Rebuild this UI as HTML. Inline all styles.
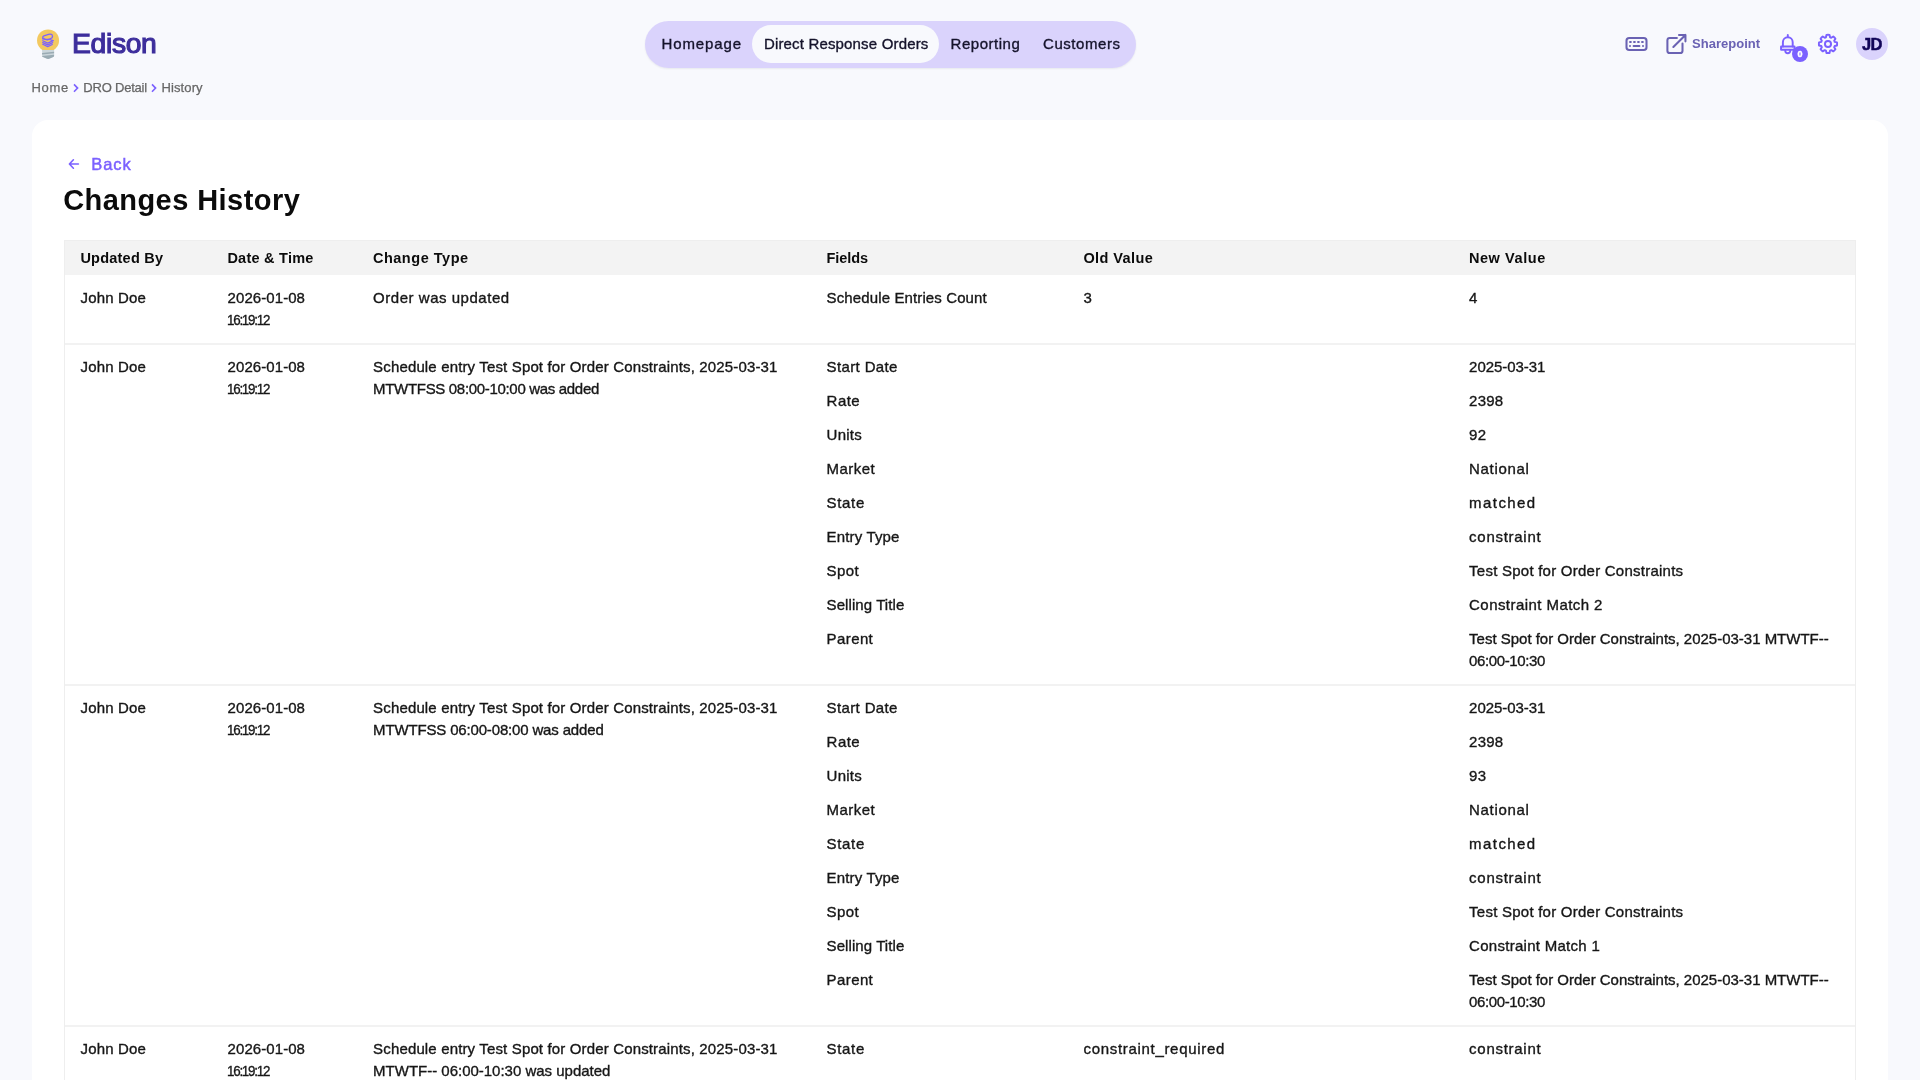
<!DOCTYPE html>
<html lang="en">
<head>
<meta charset="utf-8">
<title>Edison - Changes History</title>
<style>
*{box-sizing:border-box;margin:0;padding:0}
html,body{width:1920px;height:1080px;overflow:hidden}
body{background:#f8f9fd;font-family:"Liberation Sans",Arial,sans-serif;color:#111;position:relative}
.abs{position:absolute}
/* header */
.logo-ic{position:absolute;left:34px;top:27px;width:28px;height:34px}
.brand{position:absolute;left:72px;top:23px;font-size:28.3px;line-height:40px;font-weight:400;-webkit-text-stroke:1.15px #3d2e9c;color:#3d2e9c;white-space:nowrap}
.nav{position:absolute;left:645.3px;top:20.5px;width:490.8px;height:47px;border-radius:24px;background:#dad3fc;box-shadow:0 1px 2px rgba(16,24,40,.07)}
.nav a{position:absolute;top:4.5px;-webkit-text-stroke:0.35px #15132b;height:38px;line-height:38px;font-size:15px;color:#15132b;white-space:nowrap;text-decoration:none;}
.nav a.act{background:#f8f9fd;border-radius:19px}
.hicon{position:absolute}
.sp{position:absolute;left:1692px;top:33px;line-height:22px;font-size:13px;font-weight:700;color:#6a62b3;white-space:nowrap;}
.badge{-webkit-text-stroke:0.4px #fff;position:absolute;left:1792px;top:46px;width:16px;height:16px;border-radius:8px;background:#7b61ff;color:#fff;font-size:9px;font-weight:700;line-height:16.5px;text-align:center}
.avatar{position:absolute;left:1856px;top:28px;width:32px;height:32px;border-radius:16px;background:#dad3fc;color:#120558;-webkit-text-stroke:0.5px #120558;font-size:16.5px;font-weight:700;line-height:32.5px;text-align:center}
/* breadcrumbs */
.bc{-webkit-text-stroke:0.25px #666;position:absolute;top:77px;line-height:22px;font-size:13px;color:#666;white-space:nowrap;}
/* card */
.card{position:absolute;left:32px;top:120px;width:1856px;height:980px;background:#fff;border-radius:16px}
.back{-webkit-text-stroke:0.45px #7b61ff;position:absolute;left:91.3px;top:152px;font-size:16.5px;line-height:24px;color:#7b61ff;white-space:nowrap;}
h1{position:absolute;left:63.2px;top:180px;font-size:29px;line-height:40px;font-weight:700;color:#0b0b0b;white-space:nowrap;}
/* table */
table{position:absolute;left:64px;top:240px;width:1792px;border-collapse:separate;border-spacing:0;table-layout:fixed;border-left:1px solid #eee;border-right:1px solid #eee;border-top:1px solid #eee}
th{background:#f3f3f3;text-align:left;font-size:14.5px;font-weight:700;line-height:22px;padding:6px 16px 6px 15.4px;white-space:nowrap;color:#0b0b0b}
td{-webkit-text-stroke:0.35px #161616;vertical-align:top;font-size:15px;line-height:22px;padding:12px 16px 12px 15.6px;border-bottom:1px solid #f2f2f2;color:#161616;}
td.sub{padding:0}
.r{display:flex}
.r div{padding:12px 16px 0 15.6px}
.r:last-child div{padding-bottom:12px}
tbody tr+tr td{border-top:1px solid #f2f2f2;padding-top:11px}
tbody tr+tr td.sub{padding-top:0}
tbody tr+tr td.sub .r:first-child div{padding-top:11px}
.c4{width:257px}.c5{width:385.5px}.c6{width:401.5px}
</style>
</head>
<body>
<div id="root" style="position:absolute;left:0;top:0;width:1920px;height:1080px;will-change:transform">

<!-- logo -->
<svg class="logo-ic" viewBox="0 0 28 34">
  <circle cx="14.05" cy="13.4" r="11" fill="#f3c960"/>
  <path d="M8.1 22.9 h12 v5.6 q0 1 -.9 1.5 l-3.4 1.6 q-1.7 .6 -3.4 0 l-3.4 -1.6 q-.9 -.5 -.9 -1.5z" fill="#cbd6db"/>
  <path d="M8.1 26 l12 -1.2 v1.4 l-12 1.2z M8.1 28.9 l12 -1.2 v1 q0 .9 -.9 1.3 l-3.4 1.6 q-1.7 .6 -3.4 0 l-3.4 -1.6 q-.9 -.4 -.9 -1.1z" fill="#9aabb3"/>
  <g fill="none" stroke="#7b61ff" stroke-width="1.2" stroke-linejoin="round" stroke-linecap="round">
    <path d="M8.7 10.8 q-.2 -1.3 1.2 -1.9 l4.6 -1.5 q2.6 -.6 3.7 .6 q.9 1.2 -.3 2.6 q-.9 .9 -2.8 1.4 q-1.9 .5 -3.6 .2 q-1.2 -.3 -1.6 -1 M8.7 10.8 v1.2 l4.9 .9 l4.7 -2.2"/>
    <path d="M8.7 13.8 l5 2.3 l5.6 -2.5 l-3.6 -1.1"/>
    <path d="M8.7 15.6 l5 2.3 l5 -2.3"/>
    <path d="M8.7 17.3 l5 2.3 l4.6 -2.1"/>
  </g>
</svg>
<div class="brand"><span style="letter-spacing:-0.34px;white-space:nowrap">Edison</span></div>

<!-- nav -->
<div class="nav">
  <a style="left:16.2px"><span style="letter-spacing:0.90px;white-space:nowrap">Homepage</span></a>
  <a class="act" style="left:107.2px;width:187px;padding-left:11.4px"><span style="letter-spacing:0.17px;white-space:nowrap">Direct Response Orders</span></a>
  <a style="left:305.3px"><span style="letter-spacing:0.52px;white-space:nowrap">Reporting</span></a>
  <a style="left:397.7px"><span style="letter-spacing:0.56px;white-space:nowrap">Customers</span></a>
</div>

<!-- header icons -->
<svg class="hicon" style="left:1624px;top:32px" width="24" height="24" viewBox="0 0 24 24" fill="none" stroke="#6a62b3" stroke-width="2.05" stroke-linecap="round">
  <rect x="2.5" y="5.93" width="20" height="12" rx="2.7"/>
  <path stroke-width="2" d="M6.03 9.93h.8M10.03 9.93h.8M14.03 9.93h.8M18.03 9.93h.8M6 14h.01M9.6 14h5.8M19 14h.01"/>
</svg>
<svg class="hicon" style="left:1664px;top:32px" width="24" height="24" viewBox="0 0 24 24" fill="none" stroke="#6a62b3" stroke-width="2.05" stroke-linecap="round" stroke-linejoin="round">
  <path d="M12.9 5.95H5.8a2.4 2.4 0 00-2.4 2.4V18.65a2.4 2.4 0 002.4 2.4H16.1a2.4 2.4 0 002.4-2.4V11.4M9.35 14.95L21.45 2.95M15 2.95h6.45v6.4"/>
</svg>
<div class="sp"><span style="letter-spacing:0.02px;white-space:nowrap">Sharepoint</span></div>
<svg class="hicon" style="left:1776.25px;top:32px" width="24" height="24" viewBox="0 0 24 24" fill="none" stroke="#7b61ff" stroke-width="1.95" stroke-linejoin="round" stroke-linecap="round">
  <path d="M11.8 3V4.6"/>
  <path d="M6.9 14.4V10.2a4.9 4.9 0 019.8 0V14.4"/>
  <rect x="5.05" y="14.5" width="13.5" height="3.3" rx=".3"/>
  <path d="M9.3 18.7a2.5 2.5 0 005 0"/>
</svg>
<div class="badge">0</div>
<svg class="hicon" style="left:1816px;top:32px" width="24" height="24" viewBox="0 0 24 24" fill="none" stroke="#7b61ff" stroke-width="1.95" stroke-linejoin="round">
  <circle cx="12" cy="11.95" r="3.04"/>
  <path d="M9.95 5.26L10.47 2.98A9.10 9.10 0 0 1 13.53 2.98L14.05 5.26A7.00 7.00 0 0 1 15.29 5.77L17.26 4.52A9.10 9.10 0 0 1 19.43 6.69L18.18 8.66A7.00 7.00 0 0 1 18.69 9.90L20.97 10.42A9.10 9.10 0 0 1 20.97 13.48L18.69 14.00A7.00 7.00 0 0 1 18.18 15.24L19.43 17.21A9.10 9.10 0 0 1 17.26 19.38L15.29 18.13A7.00 7.00 0 0 1 14.05 18.64L13.53 20.92A9.10 9.10 0 0 1 10.47 20.92L9.95 18.64A7.00 7.00 0 0 1 8.71 18.13L6.74 19.38A9.10 9.10 0 0 1 4.57 17.21L5.82 15.24A7.00 7.00 0 0 1 5.31 14.00L3.03 13.48A9.10 9.10 0 0 1 3.03 10.42L5.31 9.90A7.00 7.00 0 0 1 5.82 8.66L4.57 6.69A9.10 9.10 0 0 1 6.74 4.52L8.71 5.77A7.00 7.00 0 0 1 9.95 5.26Z"/>
</svg>
<div class="avatar"><span style="letter-spacing:-0.43px;white-space:nowrap">JD</span></div>

<!-- breadcrumbs -->
<div class="bc" style="left:31.5px"><span style="letter-spacing:0.68px;white-space:nowrap">Home</span></div>
<svg class="abs" style="left:72px;top:83px" width="8" height="10" viewBox="0 0 8 10" fill="none" stroke="#7b61ff" stroke-width="1.6"><path d="M2 1.4l3.6 3.7L2 8.8"/></svg>
<div class="bc" style="left:83.3px"><span style="letter-spacing:-0.21px;white-space:nowrap">DRO Detail</span></div>
<svg class="abs" style="left:150px;top:83px" width="8" height="10" viewBox="0 0 8 10" fill="none" stroke="#7b61ff" stroke-width="1.6"><path d="M2 1.4l3.6 3.7L2 8.8"/></svg>
<div class="bc" style="left:161.5px"><span style="letter-spacing:0.11px;white-space:nowrap">History</span></div>

<!-- card -->
<div class="card"></div>
<svg class="abs" style="left:67px;top:157px" width="14" height="14" viewBox="0 0 14 14" fill="none" stroke="#7b61ff" stroke-width="1.6" stroke-linecap="round" stroke-linejoin="round"><path d="M11.4 7H2.6M6.4 2.8L2.4 7l4 4.2"/></svg>
<div class="back"><span style="letter-spacing:0.92px;white-space:nowrap">Back</span></div>
<h1><span style="letter-spacing:0.44px;white-space:nowrap">Changes History</span></h1>

<table>
<colgroup><col style="width:147px"><col style="width:145.5px"><col style="width:453.5px"><col style="width:257px"><col style="width:385.5px"><col style="width:401.5px"></colgroup>
<thead><tr><th><span style="letter-spacing:0.23px;white-space:nowrap">Updated By</span></th><th><span style="letter-spacing:0.25px;white-space:nowrap">Date &amp; Time</span></th><th><span style="letter-spacing:0.53px;white-space:nowrap">Change Type</span></th><th><span style="letter-spacing:-0.04px;white-space:nowrap">Fields</span></th><th><span style="letter-spacing:0.41px;white-space:nowrap">Old Value</span></th><th><span style="letter-spacing:0.58px;white-space:nowrap">New Value</span></th></tr></thead>
<tbody>
<tr><td><span style="letter-spacing:0.15px;white-space:nowrap">John Doe</span></td><td><span style="letter-spacing:0.07px;white-space:nowrap">2026-01-08</span><br><span style="display:inline-block;margin-left:-0.6px;white-space:nowrap;letter-spacing:-1.40px;transform:scaleX(0.892);transform-origin:0 50%">16:19:12</span></td><td><span style="letter-spacing:0.53px;white-space:nowrap">Order was updated</span></td>
 <td colspan="3" class="sub"><div class="r"><div class="c4"><span style="letter-spacing:0.12px;white-space:nowrap">Schedule Entries Count</span></div><div class="c5">3</div><div class="c6">4</div></div></td></tr>
<tr><td><span style="letter-spacing:0.15px;white-space:nowrap">John Doe</span></td><td><span style="letter-spacing:0.07px;white-space:nowrap">2026-01-08</span><br><span style="display:inline-block;margin-left:-0.6px;white-space:nowrap;letter-spacing:-1.40px;transform:scaleX(0.892);transform-origin:0 50%">16:19:12</span></td><td><span style="letter-spacing:0.15px;white-space:nowrap">Schedule entry Test Spot for Order Constraints, 2025-03-31</span><br><span style="letter-spacing:-0.32px;white-space:nowrap">MTWTFSS 08:00-10:00 was added</span></td>
 <td colspan="3" class="sub">
  <div class="r"><div class="c4"><span style="letter-spacing:0.37px;white-space:nowrap">Start Date</span></div><div class="c5"></div><div class="c6"><span style="letter-spacing:-0.05px;white-space:nowrap">2025-03-31</span></div></div>
  <div class="r"><div class="c4"><span style="letter-spacing:0.46px;white-space:nowrap">Rate</span></div><div class="c5"></div><div class="c6"><span style="letter-spacing:0.20px;white-space:nowrap">2398</span></div></div>
  <div class="r"><div class="c4"><span style="letter-spacing:0.22px;white-space:nowrap">Units</span></div><div class="c5"></div><div class="c6"><span style="letter-spacing:0.36px;white-space:nowrap">92</span></div></div>
  <div class="r"><div class="c4"><span style="letter-spacing:0.47px;white-space:nowrap">Market</span></div><div class="c5"></div><div class="c6"><span style="letter-spacing:0.66px;white-space:nowrap">National</span></div></div>
  <div class="r"><div class="c4"><span style="letter-spacing:0.67px;white-space:nowrap">State</span></div><div class="c5"></div><div class="c6"><span style="letter-spacing:1.43px;white-space:nowrap">matched</span></div></div>
  <div class="r"><div class="c4"><span style="letter-spacing:0.16px;white-space:nowrap">Entry Type</span></div><div class="c5"></div><div class="c6"><span style="letter-spacing:0.72px;white-space:nowrap">constraint</span></div></div>
  <div class="r"><div class="c4"><span style="letter-spacing:0.40px;white-space:nowrap">Spot</span></div><div class="c5"></div><div class="c6"><span style="letter-spacing:0.24px;white-space:nowrap">Test Spot for Order Constraints</span></div></div>
  <div class="r"><div class="c4"><span style="letter-spacing:0.08px;white-space:nowrap">Selling Title</span></div><div class="c5"></div><div class="c6"><span style="letter-spacing:0.44px;white-space:nowrap">Constraint Match 2</span></div></div>
  <div class="r"><div class="c4"><span style="letter-spacing:0.40px;white-space:nowrap">Parent</span></div><div class="c5"></div><div class="c6"><span style="letter-spacing:-0.01px;white-space:nowrap">Test Spot for Order Constraints, 2025-03-31 MTWTF--</span><br><span style="letter-spacing:-0.39px;white-space:nowrap">06:00-10:30</span></div></div>
 </td></tr>
<tr><td><span style="letter-spacing:0.15px;white-space:nowrap">John Doe</span></td><td><span style="letter-spacing:0.07px;white-space:nowrap">2026-01-08</span><br><span style="display:inline-block;margin-left:-0.6px;white-space:nowrap;letter-spacing:-1.40px;transform:scaleX(0.892);transform-origin:0 50%">16:19:12</span></td><td><span style="letter-spacing:0.15px;white-space:nowrap">Schedule entry Test Spot for Order Constraints, 2025-03-31</span><br><span style="letter-spacing:-0.16px;white-space:nowrap">MTWTFSS 06:00-08:00 was added</span></td>
 <td colspan="3" class="sub">
  <div class="r"><div class="c4"><span style="letter-spacing:0.37px;white-space:nowrap">Start Date</span></div><div class="c5"></div><div class="c6"><span style="letter-spacing:-0.05px;white-space:nowrap">2025-03-31</span></div></div>
  <div class="r"><div class="c4"><span style="letter-spacing:0.46px;white-space:nowrap">Rate</span></div><div class="c5"></div><div class="c6"><span style="letter-spacing:0.20px;white-space:nowrap">2398</span></div></div>
  <div class="r"><div class="c4"><span style="letter-spacing:0.22px;white-space:nowrap">Units</span></div><div class="c5"></div><div class="c6"><span style="letter-spacing:0.41px;white-space:nowrap">93</span></div></div>
  <div class="r"><div class="c4"><span style="letter-spacing:0.47px;white-space:nowrap">Market</span></div><div class="c5"></div><div class="c6"><span style="letter-spacing:0.66px;white-space:nowrap">National</span></div></div>
  <div class="r"><div class="c4"><span style="letter-spacing:0.67px;white-space:nowrap">State</span></div><div class="c5"></div><div class="c6"><span style="letter-spacing:1.43px;white-space:nowrap">matched</span></div></div>
  <div class="r"><div class="c4"><span style="letter-spacing:0.16px;white-space:nowrap">Entry Type</span></div><div class="c5"></div><div class="c6"><span style="letter-spacing:0.72px;white-space:nowrap">constraint</span></div></div>
  <div class="r"><div class="c4"><span style="letter-spacing:0.40px;white-space:nowrap">Spot</span></div><div class="c5"></div><div class="c6"><span style="letter-spacing:0.24px;white-space:nowrap">Test Spot for Order Constraints</span></div></div>
  <div class="r"><div class="c4"><span style="letter-spacing:0.08px;white-space:nowrap">Selling Title</span></div><div class="c5"></div><div class="c6"><span style="letter-spacing:0.28px;white-space:nowrap">Constraint Match 1</span></div></div>
  <div class="r"><div class="c4"><span style="letter-spacing:0.40px;white-space:nowrap">Parent</span></div><div class="c5"></div><div class="c6"><span style="letter-spacing:-0.01px;white-space:nowrap">Test Spot for Order Constraints, 2025-03-31 MTWTF--</span><br><span style="letter-spacing:-0.39px;white-space:nowrap">06:00-10:30</span></div></div>
 </td></tr>
<tr><td><span style="letter-spacing:0.15px;white-space:nowrap">John Doe</span></td><td><span style="letter-spacing:0.07px;white-space:nowrap">2026-01-08</span><br><span style="display:inline-block;margin-left:-0.6px;white-space:nowrap;letter-spacing:-1.40px;transform:scaleX(0.892);transform-origin:0 50%">16:19:12</span></td><td><span style="letter-spacing:0.15px;white-space:nowrap">Schedule entry Test Spot for Order Constraints, 2025-03-31</span><br><span style="letter-spacing:-0.01px;white-space:nowrap">MTWTF-- 06:00-10:30 was updated</span></td>
 <td colspan="3" class="sub">
  <div class="r"><div class="c4"><span style="letter-spacing:0.67px;white-space:nowrap">State</span></div><div class="c5"><span style="letter-spacing:0.68px;white-space:nowrap">constraint_required</span></div><div class="c6"><span style="letter-spacing:0.72px;white-space:nowrap">constraint</span></div></div>
 </td></tr>
</tbody>
</table>

</div>
</body>
</html>
